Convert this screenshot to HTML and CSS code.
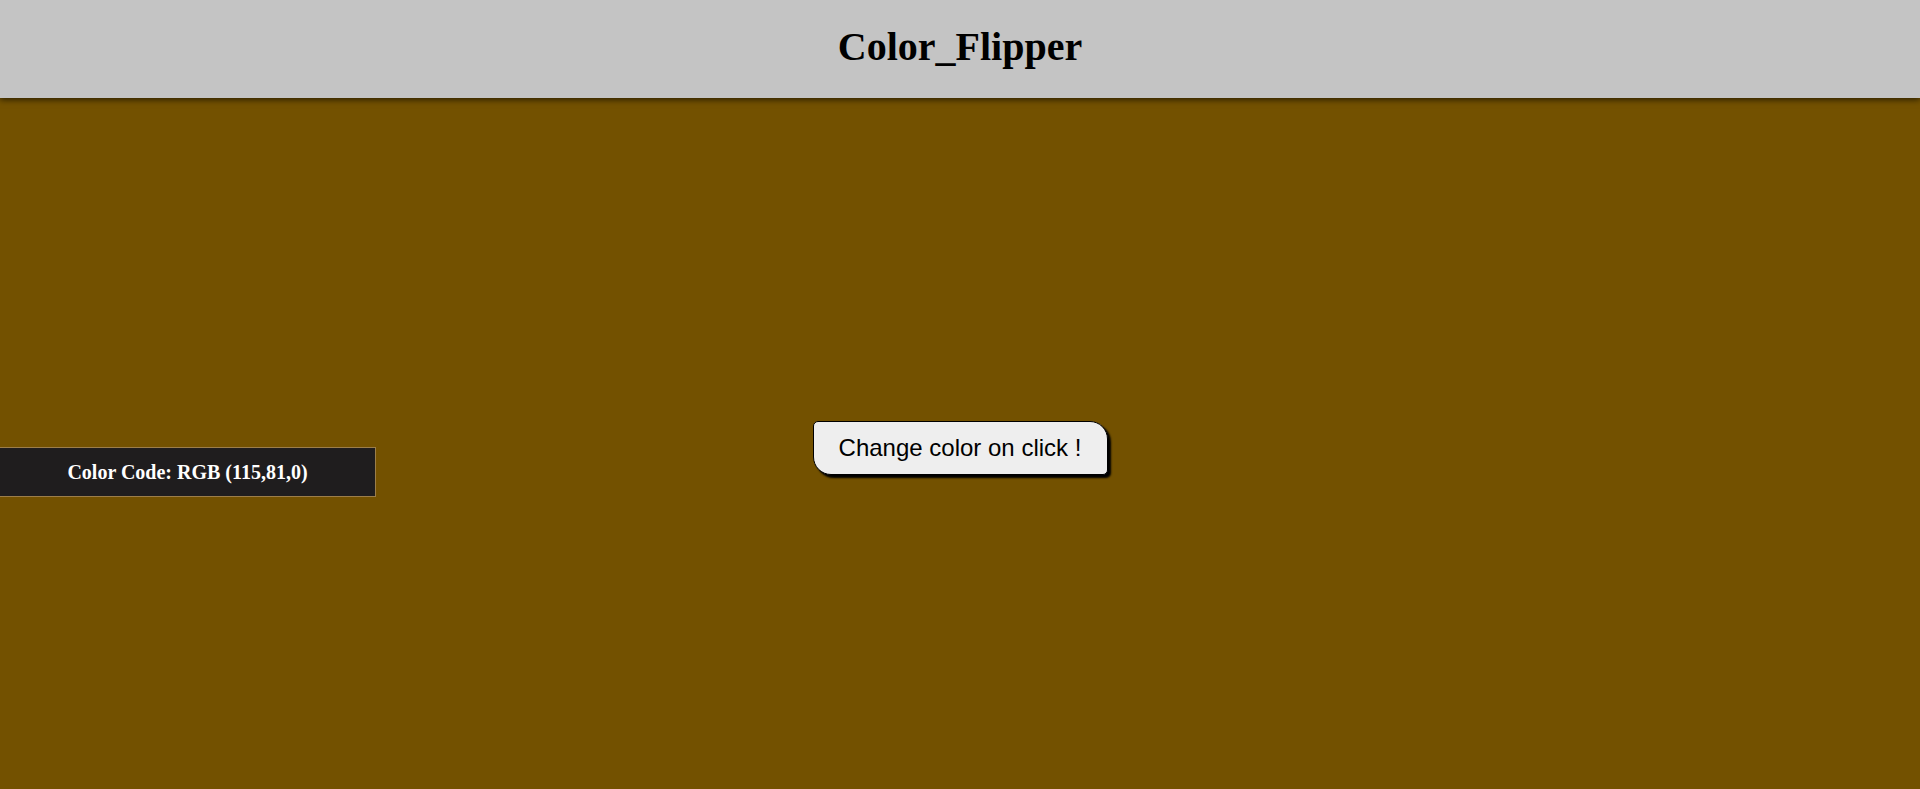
FILE: index.html
```html
<!DOCTYPE html>
<html>
<head>
<meta charset="utf-8">
<link rel="stylesheet" href="styles.css">
</head>
<body>
<header class="topbar"><h1 class="title">Color_Flipper</h1></header>
<main class="stage">
  <div class="overlap">
    <button class="flip-btn">Change color on click !</button>
    <div class="code-box">Color Code: RGB (115,81,0)</div>
  </div>
</main>
</body>
</html>
```
FILE: styles.css
```css
html, body { margin: 0; padding: 0; }
body {
  background: rgb(115, 81, 0);
  height: 789px;
  overflow: hidden;
  font-family: "Liberation Serif", "Times New Roman", serif;
}
.topbar {
  height: 98px;
  box-sizing: border-box;
  padding-bottom: 5px;
  background: #c4c4c4;
  display: flex;
  align-items: center;
  justify-content: center;
  box-shadow: 0 2px 6px rgba(0,0,0,0.6);
  position: relative;
  z-index: 1;
}
.title {
  margin: 0;
  font-size: 40px;
  font-weight: bold;
  color: #000;
}
.stage {
  padding-top: 323px;
}
.overlap {
  display: grid;
  grid-template-columns: 1fr;
}
.flip-btn {
  grid-area: 1 / 1;
  justify-self: center;
  align-self: start;
  width: 295px;
  height: 54px;
  background: #eeeeee;
  border: 1px solid #000;
  border-radius: 5px 18px 5px 18px;
  box-shadow: 3px 3px 2px #000;
  font-family: "Liberation Sans", Arial, sans-serif;
  font-size: 24px;
  color: #000;
  padding: 0;
}
.code-box {
  grid-area: 1 / 1;
  justify-self: start;
  align-self: start;
  margin-top: 26px;
  width: 376px;
  height: 50px;
  box-sizing: border-box;
  background: #1f1d1e;
  border: 1px solid #9c7e4a;
  border-left: none;
  color: #fff;
  font-weight: bold;
  font-size: 20px;
  display: flex;
  align-items: center;
  justify-content: center;
}
```
